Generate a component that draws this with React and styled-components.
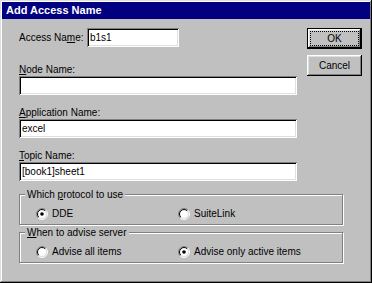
import React from 'react';
import styled, { createGlobalStyle } from 'styled-components';

const GlobalStyle = createGlobalStyle`
  html, body {
    margin: 0;
    padding: 0;
    background: #c0c0c0;
  }
  body {
    font-family: "Liberation Sans", Arial, sans-serif;
  }
`;

const Window = styled.div`
  box-sizing: border-box;
  width: 372px;
  height: 283px;
  padding: 2px;
  background: #c0c0c0;
  color: #000;
  font-size: 10px;
  box-shadow: inset -1px -1px #000, inset 1px 1px #dfdfdf,
    inset -2px -2px #808080, inset 2px 2px #fff;
`;

const TitleBar = styled.div`
  height: 17px;
  padding-left: 4px;
  background: #000080;
  color: #fff;
  font-size: 11px;
  font-weight: bold;
  line-height: 17px;
`;

const Body = styled.div`
  padding: 9px 8px 0 17px;
`;

const Top = styled.div`
  display: flex;
  gap: 10px;
`;

const Fields = styled.div`
  width: 278px;
  display: flex;
  flex-direction: column;
`;

const InlineField = styled.div`
  display: flex;
  align-items: center;
  height: 19px;
  margin-bottom: 16px;
`;

const InlineLabel = styled.label`
  width: 68px;
  white-space: nowrap;
`;

const Field = styled.div`
  display: flex;
  flex-direction: column;
  & + & {
    margin-top: 11px;
  }
`;

const Label = styled.label`
  height: 13px;
  line-height: 13px;
  white-space: nowrap;
`;

const Key = styled.span`
  text-decoration: underline;
  text-underline-offset: 1px;
`;

const TextBox = styled.input`
  box-sizing: border-box;
  width: ${p => p.$width || '100%'};
  height: 19px;
  margin: 0;
  padding: 0 3px;
  border: 0;
  outline: none;
  background: #fff;
  color: #000;
  font: inherit;
  box-shadow: inset 1px 1px #808080, inset -1px -1px #fff,
    inset 2px 2px #000, inset -2px -2px #dfdfdf;
`;

const Buttons = styled.div`
  display: flex;
  flex-direction: column;
  gap: 6px;
`;

const Button = styled.button`
  box-sizing: border-box;
  display: flex;
  width: 55px;
  height: 21px;
  margin: 0;
  padding: ${p => (p.$default ? '2px' : '3px')};
  border: ${p => (p.$default ? '1px solid #000' : '0')};
  background: #c0c0c0;
  color: #000;
  font: inherit;
  box-shadow: inset -1px -1px #000, inset 1px 1px #fff,
    inset -2px -2px #808080, inset 2px 2px #dfdfdf;
`;

const ButtonFace = styled.span`
  flex: 1;
  display: flex;
  align-items: center;
  justify-content: center;
  border: 1px dotted ${p => (p.$focused ? '#000' : 'transparent')};
`;

const Group = styled.fieldset`
  box-sizing: border-box;
  width: 324px;
  margin: 7px 0 0;
  padding: 6px 5px 4px;
  border: 1px solid #808080;
  box-shadow: inset 1px 1px #fff, 1px 1px #fff;
  & + & {
    margin-top: 1px;
  }
`;

const Caption = styled.legend`
  padding: 0 2px;
  margin: 0;
  line-height: 13px;
  background: #c0c0c0;
`;

const Options = styled.div`
  display: grid;
  grid-template-columns: 142px auto;
  margin-left: 11px;
  height: 13px;
`;

const Option = styled.label`
  display: flex;
  align-items: center;
  gap: 4px;
  line-height: 13px;
  white-space: nowrap;
`;

const k = 0.7071;
const arc = (r, from) => {
  const a = [6 - r * k, 6 + r * k];
  const b = [6 + r * k, 6 - r * k];
  const [s, e] = from === 'tl' ? [a, b] : [b, a];
  return `M${s[0]} ${s[1]} A${r} ${r} 0 0 1 ${e[0]} ${e[1]}`;
};

const Radio = ({ checked }) => (
  <svg width="12" height="12" viewBox="0 0 12 12">
    <circle cx="6" cy="6" r="4.5" fill="#fff" />
    <path d={arc(5.5, 'tl')} stroke="#808080" fill="none" />
    <path d={arc(5.5, 'br')} stroke="#fff" fill="none" />
    <path d={arc(4.5, 'tl')} stroke="#000" fill="none" />
    <path d={arc(4.5, 'br')} stroke="#dfdfdf" fill="none" />
    {checked && <circle cx="6" cy="6" r="1.8" fill="#000" />}
  </svg>
);

const App = () => (
  <>
    <GlobalStyle />
    <Window>
      <TitleBar>Add Access Name</TitleBar>
      <Body>
        <Top>
          <Fields>
            <InlineField>
              <InlineLabel>Access Na<Key>m</Key>e:</InlineLabel>
              <TextBox $width="92px" defaultValue="b1s1" />
            </InlineField>
            <Field>
              <Label><Key>N</Key>ode Name:</Label>
              <TextBox defaultValue="" />
            </Field>
            <Field>
              <Label><Key>A</Key>pplication Name:</Label>
              <TextBox defaultValue="excel" />
            </Field>
            <Field>
              <Label><Key>T</Key>opic Name:</Label>
              <TextBox defaultValue="[book1]sheet1" />
            </Field>
          </Fields>
          <Buttons>
            <Button $default>
              <ButtonFace $focused>OK</ButtonFace>
            </Button>
            <Button>
              <ButtonFace>Cancel</ButtonFace>
            </Button>
          </Buttons>
        </Top>

        <Group>
          <Caption>Which <Key>p</Key>rotocol to use</Caption>
          <Options>
            <Option><Radio checked />DDE</Option>
            <Option><Radio />SuiteLink</Option>
          </Options>
        </Group>
        <Group>
          <Caption><Key>W</Key>hen to advise server</Caption>
          <Options>
            <Option><Radio />Advise all items</Option>
            <Option><Radio checked />Advise only active items</Option>
          </Options>
        </Group>
      </Body>
    </Window>
  </>
);

export default App;
